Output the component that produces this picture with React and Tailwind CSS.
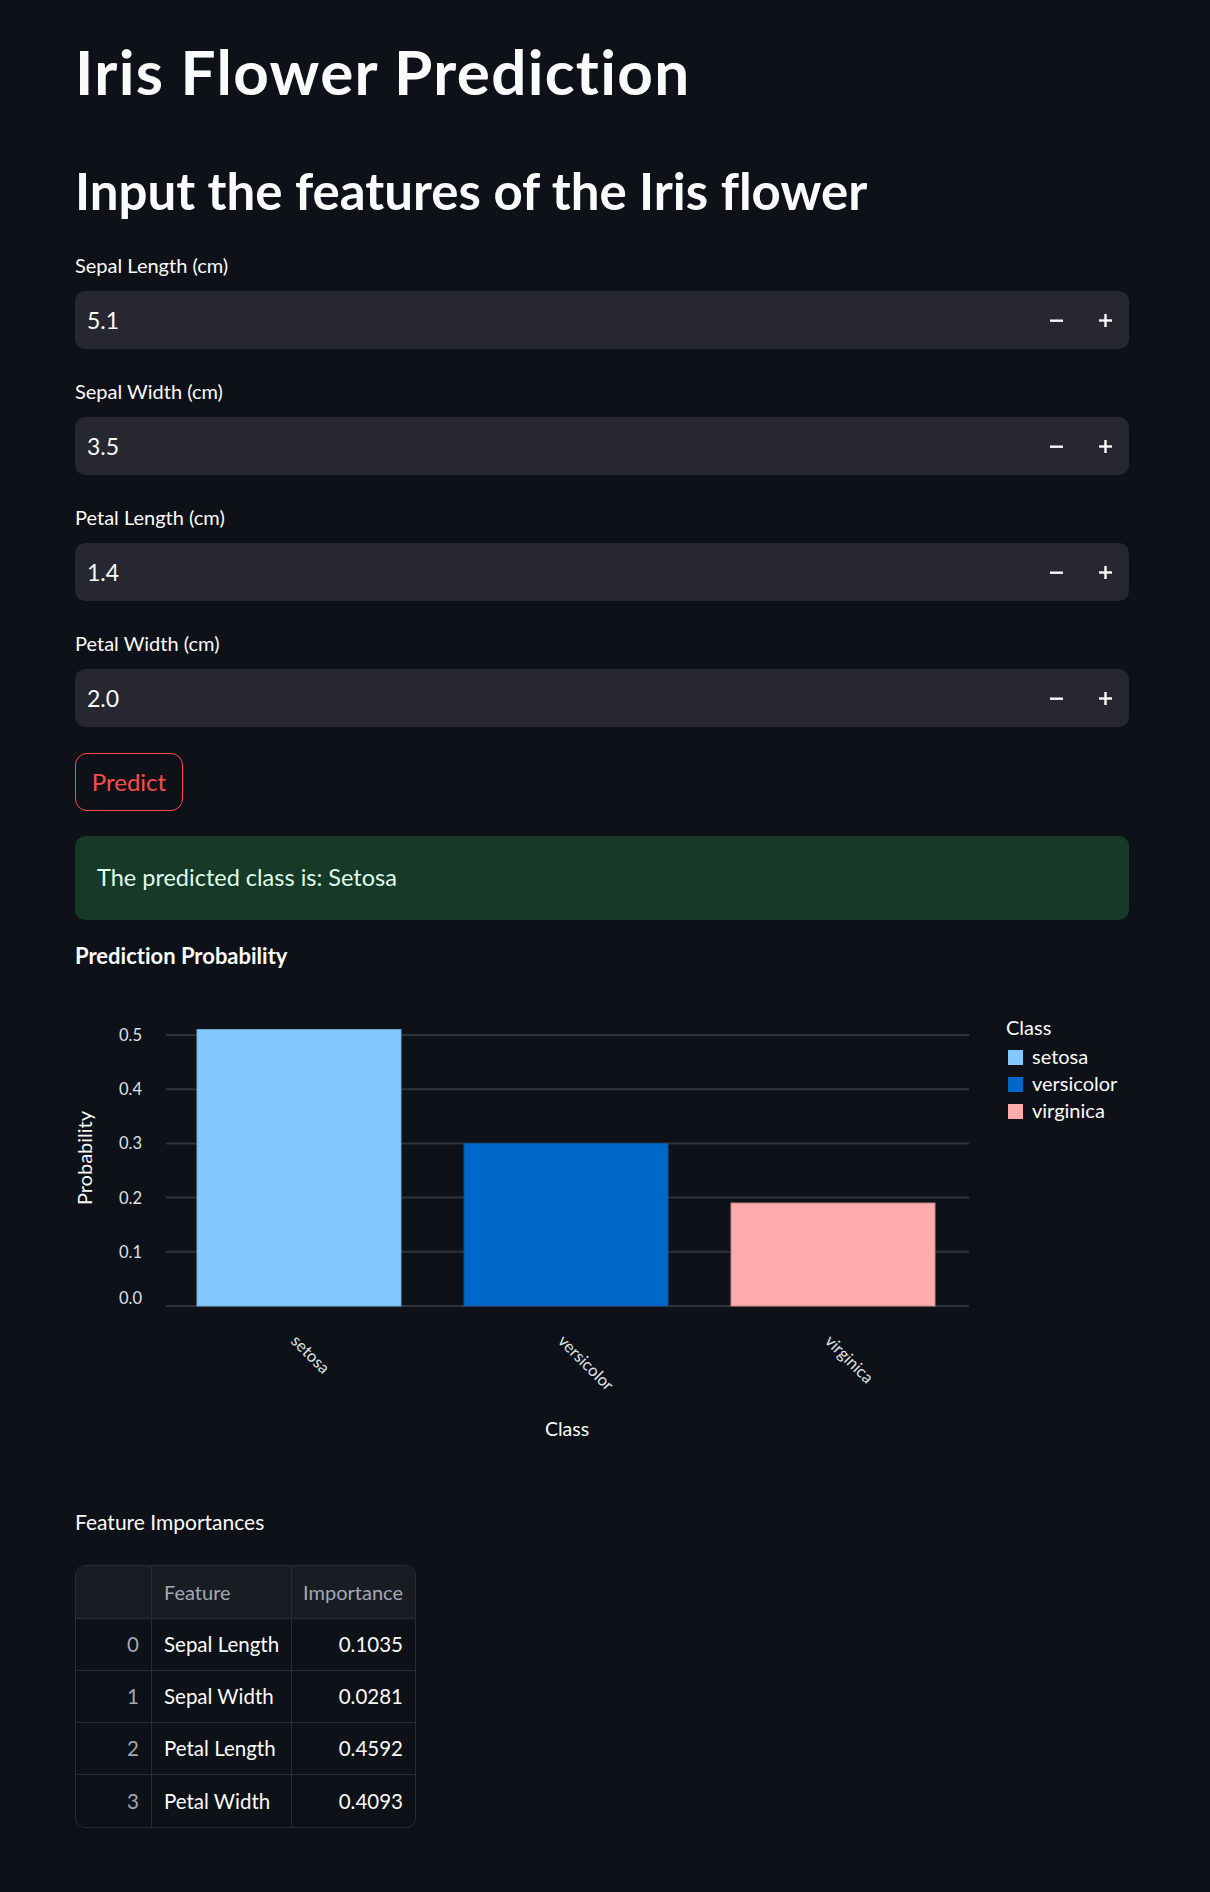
import React from 'react';

const font = { fontFamily: 'Lato, "Noto Sans", sans-serif', fontVariantLigatures: 'none' };

const inputs = [
  { label: 'Sepal Length (cm)', value: '5.1' },
  { label: 'Sepal Width (cm)', value: '3.5' },
  { label: 'Petal Length (cm)', value: '1.4' },
  { label: 'Petal Width (cm)', value: '2.0' },
];

const bars = [
  { name: 'setosa', value: 0.51, color: '#83c9ff', stroke: '#6fa9d6', x: 122 },
  { name: 'versicolor', value: 0.3, color: '#0068c9', stroke: '#0a559d', x: 389 },
  { name: 'virginica', value: 0.19, color: '#ffabab', stroke: '#c98686', x: 656 },
];

const rows = [
  ['0', 'Sepal Length', '0.1035'],
  ['1', 'Sepal Width', '0.0281'],
  ['2', 'Petal Length', '0.4592'],
  ['3', 'Petal Width', '0.4093'],
];

function NumberInput({ label, value }) {
  return (
    <div>
      <div className="text-[20px] leading-[20px] text-[#fafafa]">{label}</div>
      <div className="mt-[16px] h-[58px] rounded-[10px] bg-[#262730] flex items-center pl-[12px] pr-[17px]">
        <span className="flex-1 text-[23px] text-[#fafafa]">{value}</span>
        <svg width="13" height="13" viewBox="0 0 13 13" className="mr-[36px]">
          <rect x="0" y="5.5" width="13" height="2.4" fill="#fafafa" />
        </svg>
        <svg width="13" height="13" viewBox="0 0 13 13">
          <rect x="0" y="5.3" width="13" height="2.4" fill="#fafafa" />
          <rect x="5.3" y="0" width="2.4" height="13" fill="#fafafa" />
        </svg>
      </div>
    </div>
  );
}

function Chart() {
  const y0 = 305;
  const step = 54.2;
  const ticks = [0, 0.1, 0.2, 0.3, 0.4, 0.5];
  return (
    <svg width="1054" height="460" className="block mt-[28px]" style={font}>
      {ticks.map((t, i) => {
        const y = y0 - i * step;
        return (
          <g key={t}>
            <line x1="91" x2="894" y1={y} y2={y} stroke="#31333b" strokeWidth="2" />
            <text x="67" y={i === 0 ? y - 2 : y + 6} textAnchor="end" fontSize="16.5" fill="#dfe1e6">
              {t.toFixed(1)}
            </text>
          </g>
        );
      })}
      {bars.map(b => {
        const top = y0 - (b.value / 0.1) * step;
        const cx = b.x + 102;
        return (
          <g key={b.name}>
            <rect x={b.x} y={top} width="204" height={y0 - top} fill={b.color} stroke={b.stroke} strokeWidth="1" />
            <text x={cx - 9} y="341" fontSize="16.5" fill="#dfe1e6" transform={`rotate(45 ${cx - 9} 341)`}>
              {b.name}
            </text>
          </g>
        );
      })}
      <text x="492" y="435" textAnchor="middle" fontSize="19.5" fill="#fafafa">Class</text>
      <text x="17" y="157" textAnchor="middle" fontSize="20" fill="#fafafa" transform="rotate(-90 17 157)">Probability</text>
      <text x="931" y="34" fontSize="20" fill="#fafafa">Class</text>
      {bars.map((b, i) => (
        <g key={b.name}>
          <rect x="933" y={49 + i * 27} width="15" height="15" fill={b.color} />
          <text x="957" y={63 + i * 27} fontSize="20" fill="#fafafa">{b.name}</text>
        </g>
      ))}
    </svg>
  );
}

export default function App() {
  return (
    <div className="min-h-[1892px] bg-[#0e1117] text-[#fafafa]" style={font}>
      <div className="ml-[75px] w-[1054px] pt-[40px] pb-[60px]">
        <h1 className="text-[62px] leading-[62px] font-bold tracking-[1.3px]">Iris Flower Prediction</h1>
        <h2 className="mt-[63px] text-[51px] leading-[51px] font-bold">Input the features of the Iris flower</h2>

        <div className="mt-[39px] flex flex-col gap-[32px]">
          {inputs.map(inp => <NumberInput key={inp.label} {...inp} />)}
        </div>

        <button className="mt-[26px] h-[58px] w-[108px] rounded-[12px] border border-[#ff4b4b] text-[#ff4b4b] text-[24px] flex items-center justify-center">
          Predict
        </button>

        <div className="mt-[25px] h-[84px] rounded-[10px] bg-[#173928] flex items-center px-[22px] text-[23.5px] text-[#dffde9]">
          The predicted class is: Setosa
        </div>

        <div className="mt-[19px] py-[2px] text-[22px] leading-[30px] font-bold">Prediction Probability</div>

        <Chart />

        <div className="mt-[50px] text-[21px] leading-[21px]">Feature Importances</div>

        <div className="mt-[33px] w-[341px] rounded-[10px] border border-[#2a2c33] overflow-hidden">
          <div className="flex h-[53px] bg-[#1a1c24] border-b border-[#2a2c33] text-[20px] text-[#a3a8b4]">
            <div className="w-[76px] border-r border-[#2a2c33]" />
            <div className="w-[140px] border-r border-[#2a2c33] flex items-center pl-[12px]">Feature</div>
            <div className="flex-1 flex items-center justify-end pr-[12px]">Importance</div>
          </div>
          {rows.map((r, i) => (
            <div key={r[0]} className={`flex h-[52px] text-[20.5px] ${i < rows.length - 1 ? 'border-b border-[#2a2c33]' : ''}`}>
              <div className="w-[76px] border-r border-[#2a2c33] flex items-center justify-end pr-[12px] text-[#a3a8b4]">{r[0]}</div>
              <div className="w-[140px] border-r border-[#2a2c33] flex items-center pl-[12px]">{r[1]}</div>
              <div className="flex-1 flex items-center justify-end pr-[12px]">{r[2]}</div>
            </div>
          ))}
        </div>
      </div>
    </div>
  );
}
